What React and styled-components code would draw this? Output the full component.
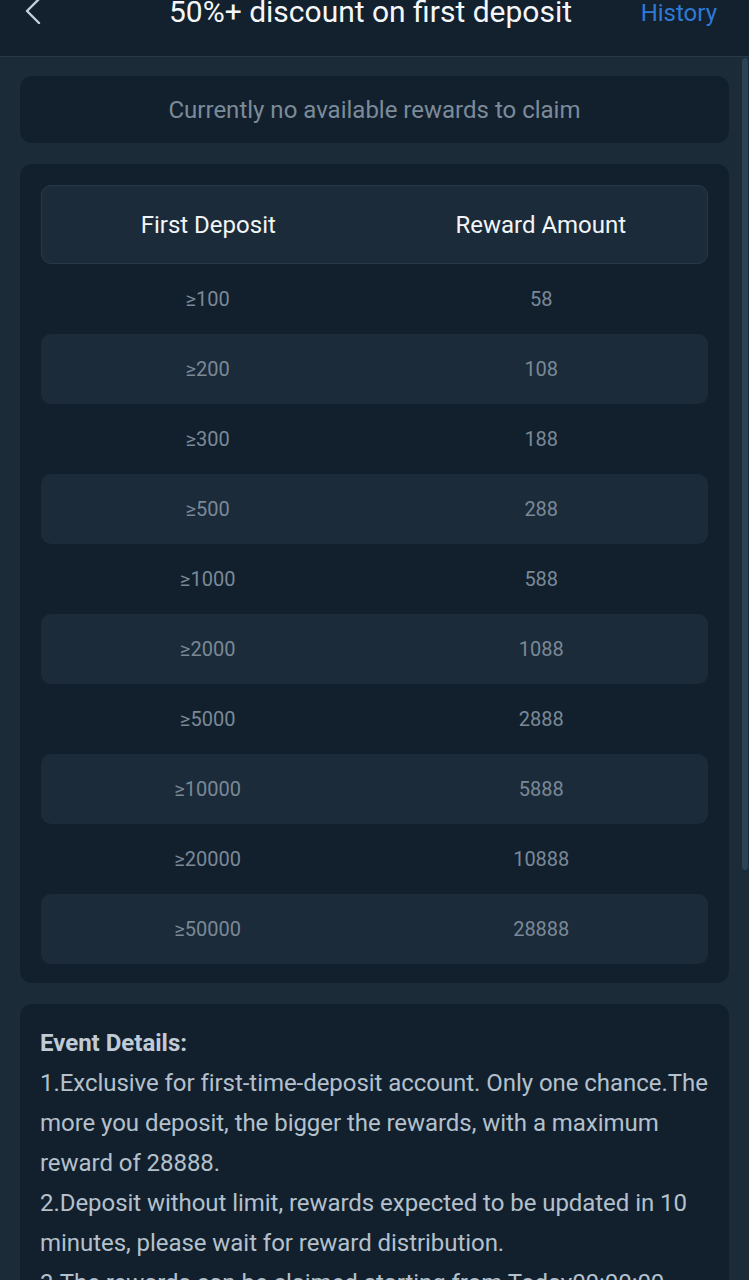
import React from "react";
import styled, { createGlobalStyle } from "styled-components";

const GlobalStyle = createGlobalStyle`
  html, body {
    margin: 0;
    padding: 0;
    background: #1c2b38;
  }
  body {
    font-family: Roboto, "Noto Sans", "Liberation Sans", sans-serif;
    -webkit-font-smoothing: antialiased;
  }
`;

const tiers = [
  ["≥100", "58"],
  ["≥200", "108"],
  ["≥300", "188"],
  ["≥500", "288"],
  ["≥1000", "588"],
  ["≥2000", "1088"],
  ["≥5000", "2888"],
  ["≥10000", "5888"],
  ["≥20000", "10888"],
  ["≥50000", "28888"],
];

const details = [
  "1.Exclusive for first-time-deposit account. Only one chance.The more you deposit, the bigger the rewards, with a maximum reward of 28888.",
  "2.Deposit without limit, rewards expected to be updated in 10 minutes, please wait for reward distribution.",
  "3.The rewards can be claimed starting from Today00:00:00",
];

const App = () => {
  return (
    <Page>
      <GlobalStyle />
      <Header>
        <BackButton>
          <svg width="18" height="26" viewBox="0 0 18 26" fill="none">
            <path d="M15 1 L3 13 L15 25" stroke="#c3cfdb" strokeWidth="2.4" strokeLinecap="round" strokeLinejoin="round" />
          </svg>
        </BackButton>
        <Title>50%+ discount on first deposit</Title>
        <HistoryLink>History</HistoryLink>
      </Header>
      <Content>
        <NoticeCard>Currently no available rewards to claim</NoticeCard>
        <TableCard>
          <HeadRow>
            <HeadCell>First Deposit</HeadCell>
            <HeadCell>Reward Amount</HeadCell>
          </HeadRow>
          {tiers.map(([deposit, reward], i) => (
            <Row key={deposit} $striped={i % 2 === 1}>
              <Cell>{deposit}</Cell>
              <Cell>{reward}</Cell>
            </Row>
          ))}
        </TableCard>
        <DetailsCard>
          <DetailsTitle>Event Details:</DetailsTitle>
          {details.map((line) => (
            <DetailsLine key={line}>{line}</DetailsLine>
          ))}
        </DetailsCard>
      </Content>
      <Scrollbar />
    </Page>
  );
};

const Page = styled.div`
  position: relative;
  width: 749px;
  height: 1280px;
  overflow: hidden;
  background: #1c2b38;
`;

const Header = styled.header`
  display: grid;
  grid-template-columns: 1fr auto 1fr;
  align-items: start;
  height: 57px;
  background: #13202d;
  border-bottom: 1px solid #283a4a;
  box-sizing: border-box;
  padding: 0 32px 0 24px;
`;

const BackButton = styled.div`
  display: flex;
  align-items: flex-start;
  margin-top: -2px;
`;

const Title = styled.h1`
  margin: 0;
  font-size: 30px;
  line-height: 24px;
  font-weight: 400;
  color: #f4f7fa;
  white-space: nowrap;
`;

const HistoryLink = styled.span`
  justify-self: end;
  font-size: 24px;
  line-height: 26px;
  color: #2e7ad6;
`;

const Content = styled.main`
  display: flex;
  flex-direction: column;
  gap: 21px;
  padding: 19px 20px 0;
`;

const Card = styled.section`
  background: #12202e;
  border-radius: 12px;
`;

const NoticeCard = styled(Card)`
  height: 67px;
  display: flex;
  align-items: center;
  justify-content: center;
  font-size: 24px;
  color: #7c8b99;
`;

const TableCard = styled(Card)`
  padding: 21px 21px 19px;
  display: flex;
  flex-direction: column;
`;

const HeadRow = styled.div`
  display: grid;
  grid-template-columns: 1fr 1fr;
  align-items: center;
  height: 79px;
  box-sizing: border-box;
  background: #1c2b39;
  border: 1px solid #26394a;
  border-radius: 10px;
`;

const HeadCell = styled.div`
  text-align: center;
  font-size: 24px;
  color: #f2f5f8;
`;

const Row = styled.div`
  display: grid;
  grid-template-columns: 1fr 1fr;
  align-items: center;
  height: 70px;
  border-radius: 10px;
  background: ${(props) => (props.$striped ? "#1c2b39" : "transparent")};
`;

const Cell = styled.div`
  text-align: center;
  font-size: 20px;
  color: #7a8997;
`;

const DetailsCard = styled(Card)`
  padding: 19px 12px 20px 20px;
`;

const DetailsTitle = styled.div`
  font-size: 24px;
  line-height: 40px;
  font-weight: 700;
  color: #c0cbd6;
`;

const DetailsLine = styled.p`
  margin: 0;
  font-size: 24px;
  line-height: 40px;
  letter-spacing: -0.05px;
  color: #b4c0cc;
`;

const Scrollbar = styled.div`
  position: absolute;
  top: 58px;
  right: 1px;
  width: 6px;
  height: 812px;
  background: #2d4252;
  border-radius: 3px;
`;

export default App;
